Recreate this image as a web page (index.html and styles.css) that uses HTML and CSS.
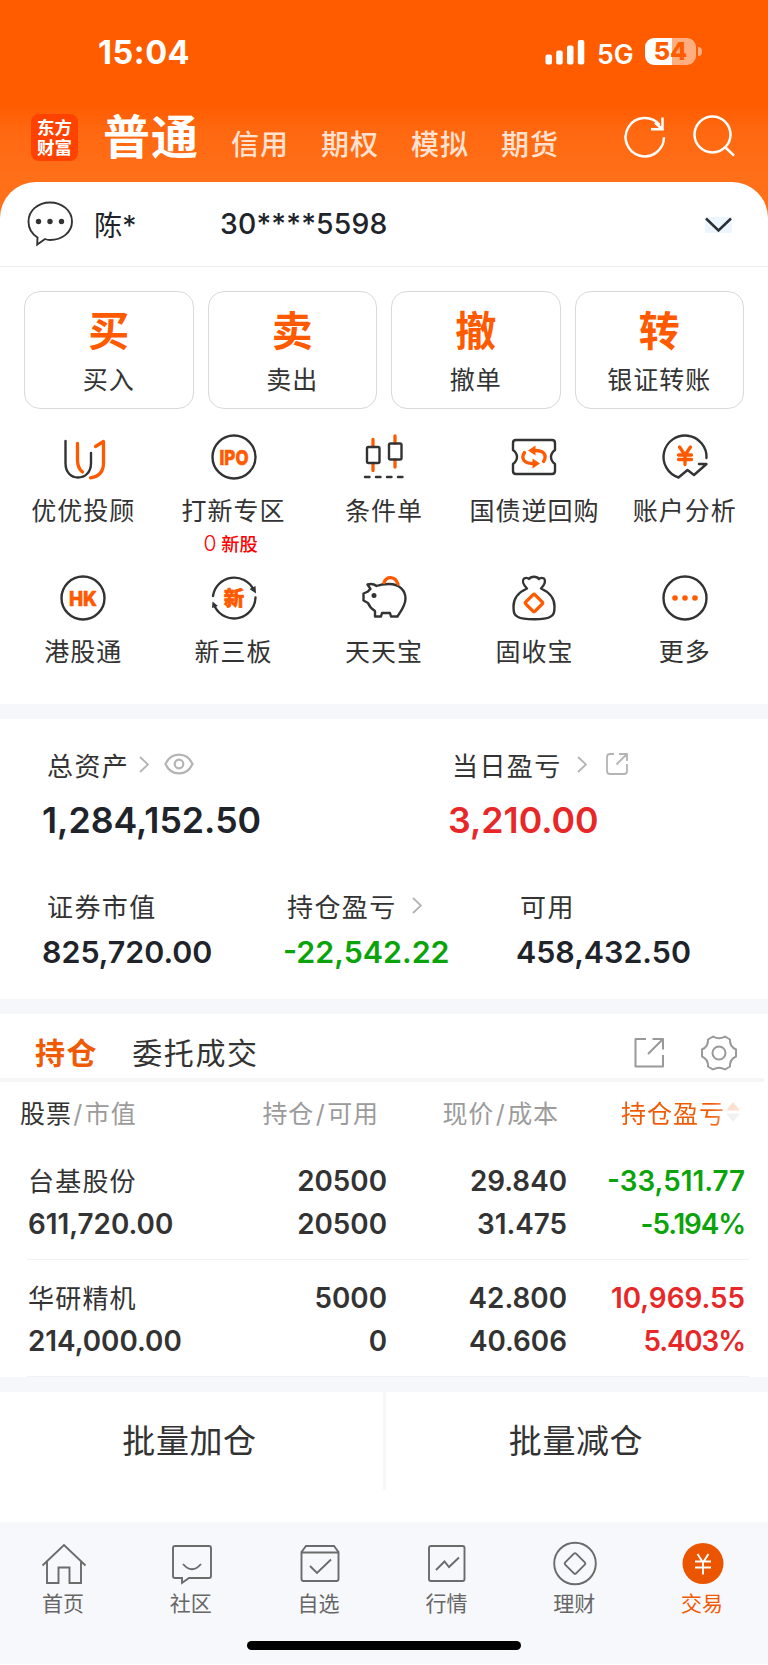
FILE: index.html
```html
<!DOCTYPE html>
<html lang="zh-CN">
<head>
	<meta charset="UTF-8">
	<meta name="viewport" content="width=device-width, initial-scale=1.0">
	<title>东方财富 - 交易</title>
	<link rel="stylesheet" href="styles.css">
</head>
<body>

<!-- Status bar and account type tabs -->
<div class="top">
	<div class="statusBar">
		<span class="time">15:04</span>
		<svg class="signal" width="40" height="26" viewBox="0 0 40 26" fill="#fff">
			<rect x="0.5" y="14.5" width="6.5" height="10" rx="2"/>
			<rect x="11.2" y="10.5" width="6.5" height="14" rx="2"/>
			<rect x="22" y="5.5" width="6.5" height="19" rx="2"/>
			<rect x="32.8" y="0" width="6.5" height="24.5" rx="2"/>
		</svg>
		<span class="network">5G</span>
		<span class="battery">54</span>
		<span class="batteryTip"></span>
	</div>
	<div class="navBar">
		<div class="logo">东方<br>财富</div>
		<span class="navMain">普通</span>
		<span class="navItem">信用</span>
		<span class="navItem">期权</span>
		<span class="navItem">模拟</span>
		<span class="navItem">期货</span>
		<div class="navIcons">
			<svg width="44" height="44" viewBox="0 0 44 44" fill="none" stroke="#fff" stroke-width="2.5">
				<path d="M41 22.3A19.2 19.2 0 1 1 36.5 9.8"/>
				<path d="M39.5 2.5v11.8H28M39 14 32 7.5"/>
			</svg>
			<svg width="44" height="44" viewBox="0 0 44 44" fill="none" stroke="#fff" stroke-width="2.5">
				<circle cx="20.5" cy="19.5" r="18"/>
				<path d="M33 32l9 8.7"/>
			</svg>
		</div>
	</div>
</div>

<div class="sheet">
	<div class="account">
		<svg class="bubble" width="48" height="48" viewBox="0 0 48 48">
			<path d="M11.5 38.5C6 35 2.500 29.500 2.500 22.500C2.500 11.500 12 3.500 24 3.500s22 8 22 19-10 18.500-22 18.500q-3 0-5-1L11.200 45.500z" fill="none" stroke="#333" stroke-width="1.900"/>
			<circle cx="12.500" cy="22.500" r="2.700" fill="#333"/>
			<circle cx="24" cy="22.500" r="2.700" fill="#333"/>
			<circle cx="35.500" cy="22.500" r="2.700" fill="#333"/>
		</svg>
		<span class="accountName">陈*</span>
		<span class="accountNo">30****5598</span>
		<svg class="accountArrow" width="27" height="16" viewBox="0 0 27 16" fill="none" stroke="#2b2f33" stroke-width="2.500">
			<path d="M1 1.500 13.500 13.500 26 1.500"/>
		</svg>
	</div>

	<!-- Buy / sell / cancel / transfer -->
	<div class="cards">
		<div class="card"><b>买</b><span>买入</span></div>
		<div class="card"><b>卖</b><span>卖出</span></div>
		<div class="card"><b>撤</b><span>撤单</span></div>
		<div class="card"><b>转</b><span>银证转账</span></div>
	</div>

	<!-- Shortcuts -->
	<div class="tools">
		<div class="tool">
			<svg viewBox="0 0 52 52">
				<path d="M8.500 10v22c0 10 6 14.500 12.500 14.500S34 42 34 32V22"/>
				<path class="hot" d="M20.500 12.500V29q0 8 5 12M38.500 15.500l8-5V32q0 13-13 14.800"/>
			</svg>
			<span>优优投顾</span>
		</div>
		<div class="tool">
			<svg viewBox="0 0 52 52">
				<circle cx="26" cy="26" r="21.500"/>
				<text x="26" y="33.500" textLength="29" lengthAdjust="spacingAndGlyphs">IPO</text>
			</svg>
			<span>打新专区</span>
			<em><i>0</i> 新股</em>
		</div>
		<div class="tool">
			<svg viewBox="0 0 52 52">
				<path class="hot" d="M15 8.500v7M15 32.500v7M37 5v7M37 29v7"/>
				<rect x="9" y="16" width="12.500" height="16" rx="1.500"/>
				<rect x="31" y="12.500" width="12.500" height="16" rx="1.500"/>
				<path d="M7 46h4.500M18 46h4.500M29 46h4.500M40 46h4.500"/>
			</svg>
			<span>条件单</span>
		</div>
		<div class="tool">
			<svg viewBox="0 0 52 52">
				<path d="M8 9h36q3 0 3 3v7q-4 3-4 7t4 7v7q0 3-3 3H8q-3 0-3-3v-7q4-3 4-7t-4-7v-7q0-3 3-3z"/>
				<path class="hot" d="M16.500 21.500q-3 4.500-.5 8 2.500 3 8.500 3M35.500 30.500q3-4.500.5-8-2.500-3-8.500-3"/>
				<path class="hotFill" d="M20 19.500l7.500-5v10zM32 32.500l-7.500-5v10z"/>
			</svg>
			<span>国债逆回购</span>
		</div>
		<div class="tool">
			<svg viewBox="0 0 52 52">
				<path d="M47.500 27A21.500 21.500 0 1 0 19.500 46.500L28.500 39l6.500 5L47.500 33H40"/>
				<path class="hot" d="M20.500 16l5.500 8 5.500-8M26 24v9.500M19.500 24h13M19.500 28.500h13"/>
			</svg>
			<span>账户分析</span>
		</div>
		<div class="tool">
			<svg viewBox="0 0 52 52">
				<circle cx="26" cy="26" r="21.500"/>
				<text x="26" y="33.500" textLength="28" lengthAdjust="spacingAndGlyphs">HK</text>
			</svg>
			<span>港股通</span>
		</div>
		<div class="tool">
			<svg viewBox="0 0 52 52">
				<path d="M5 24A21.500 21.500 0 0 1 45.500 17.500M47.500 25.500A21.500 21.500 0 0 1 7 35"/>
				<path class="darkFill" d="M41.500 17l6-3 .5 7.500zM4.500 29.500l5.500 4.500-6 2z"/>
				<text x="26" y="33.500">新</text>
			</svg>
			<span>新三板</span>
		</div>
		<div class="tool">
			<svg viewBox="0 0 52 52">
				<path d="M9.500 12.500q5.500-1.500 9 1.500 5-2 12.500-2C41 12 47.500 18 47.500 26.500c0 7-4.500 12.500-8 18H33l-1-3.500h-8L23 44.500h-6V39q-5-3-7-8l-4.500-2.500v-7L10 19.500q1-1.500 2.500-2.500z"/>
				<path class="hot" d="M26 10.500C29 3.500 37 4 40 12"/>
				<circle class="darkFill" cx="16" cy="23.500" r="2.500"/>
			</svg>
			<span>天天宝</span>
		</div>
		<div class="tool">
			<svg viewBox="0 0 52 52">
				<path d="M19 16.500c-4-4-5-8-3-10 2-1 4-.5 5 .5 2-3 8-3 10 0 1-1 3-1.500 5-.5 2 2 1 6-3 10 9 4 13.500 10 13.500 18 0 6-.5 8.500-4.500 10.500-5 3-27 3-32 0-4-2-4.500-4.500-4.500-10.500 0-8 4.500-14 13.500-18z"/>
				<rect class="hot" x="19.500" y="24.500" width="13" height="13" rx="1.500" transform="rotate(45 26 31)"/>
			</svg>
			<span>固收宝</span>
		</div>
		<div class="tool">
			<svg viewBox="0 0 52 52">
				<circle cx="26" cy="26" r="21.500"/>
				<circle class="hotFill" cx="16" cy="26" r="2.800"/>
				<circle class="hotFill" cx="26" cy="26" r="2.800"/>
				<circle class="hotFill" cx="36" cy="26" r="2.800"/>
			</svg>
			<span>更多</span>
		</div>
	</div>
</div>

<!-- Assets -->
<div class="assets">
	<div class="assetTop">
		<div class="asset">
			<p class="label">总资产
				<svg class="arrow" width="10" height="17" viewBox="0 0 10 17"><path d="M1 1l8 7.500L1 16"/></svg>
				<svg class="eye" width="30" height="22" viewBox="0 0 30 22"><path d="M1.500 11C7-1.500 23-1.500 28.500 11 23 23.500 7 23.500 1.500 11z"/><circle cx="15" cy="11" r="4.300"/></svg>
			</p>
			<p class="bigNum">1,284,152.50</p>
		</div>
		<div class="asset">
			<p class="label">当日盈亏
				<svg class="arrow wide" width="10" height="17" viewBox="0 0 10 17"><path d="M1 1l8 7.500L1 16"/></svg>
				<svg class="share" width="24" height="24" viewBox="0 0 24 24"><path d="M9 2H5Q2 2 2 5v14q0 3 3 3h14q3 0 3-3v-7M14 2h8v7M21.500 2.500 11.500 12.500"/></svg>
			</p>
			<p class="bigNum up">3,210.00</p>
		</div>
	</div>
	<div class="assetBottom">
		<div class="asset">
			<p class="label">证券市值</p>
			<p class="num">825,720.00</p>
		</div>
		<div class="asset">
			<p class="label">持仓盈亏
				<svg class="arrow wide" width="10" height="17" viewBox="0 0 10 17"><path d="M1 1l8 7.500L1 16"/></svg>
			</p>
			<p class="num down">-22,542.22</p>
		</div>
		<div class="asset">
			<p class="label">可用</p>
			<p class="num">458,432.50</p>
		</div>
	</div>
</div>

<!-- Positions -->
<div class="positions">
	<div class="tabs">
		<span class="tab active">持仓</span>
		<span class="tab">委托成交</span>
		<svg class="tabShare" width="32" height="32" viewBox="0 0 32 32"><path d="M13 2H2.500v27.500h27.500V18M19.500 2H30v10.500M29.500 2.500 15 17"/></svg>
		<svg class="gear" width="38" height="38" viewBox="0 0 38 38">
			<path d="M13 2.500Q19 6 25 2.500L30 5.500Q29.500 12.500 36 15.500V22.500Q29.500 25.500 30 32.500L25 35.500Q19 32 13 35.500L8 32.500Q8.500 25.500 2 22.500V15.500Q8.500 12.500 8 5.500Z"/>
			<circle cx="19" cy="19" r="6.500"/>
		</svg>
	</div>
	<div class="tableHead">
		<span><i>股票</i><u>/</u>市值</span>
		<span>持仓<u>/</u>可用</span>
		<span>现价<u>/</u>成本</span>
		<span class="sorted">持仓盈亏<svg width="16" height="22" viewBox="0 0 16 22"><path d="M8 1l7 8.500H1z" fill="#ffe0d0"/><path d="M8 21l7-8.500H1z" fill="#f2f2f4"/></svg></span>
	</div>
	<div class="row">
		<div><span class="stock">台基股份</span><span>611,720.00</span></div>
		<div><span>20500</span><span>20500</span></div>
		<div><span>29.840</span><span>31.475</span></div>
		<div class="down"><span>-33,511.77</span><span class="percent">-5.194%</span></div>
	</div>
	<div class="row">
		<div><span class="stock">华研精机</span><span>214,000.00</span></div>
		<div><span>5000</span><span>0</span></div>
		<div><span>42.800</span><span>40.606</span></div>
		<div class="up"><span>10,969.55</span><span class="percent">5.403%</span></div>
	</div>
</div>

<div class="batch">
	<div>批量加仓</div>
	<div>批量减仓</div>
</div>

<!-- Bottom navigation -->
<div class="bottomBar">
	<div class="menu">
		<div class="menuItem">
			<svg viewBox="0 0 46 46"><path d="M1.500 24.500 23 4l21.500 20.500M6 20.500V42h11.500V26.500h11V42H40V20.500"/></svg>
			<span>首页</span>
		</div>
		<div class="menuItem">
			<svg viewBox="0 0 46 46"><path d="M6 5h34q2 0 2 2v28q0 2-2 2H20l-7 5v-5H6q-2 0-2-2V7q0-2 2-2z"/><path d="M14 23q9 10.500 18 0"/></svg>
			<span>社区</span>
		</div>
		<div class="menuItem">
			<svg viewBox="0 0 46 46"><path d="M4.500 11 9 5h28l4.500 6v27q0 2-2 2h-33q-2 0-2-2zM4.500 11.500h37M13 25l7 7 14-13.500"/></svg>
			<span>自选</span>
		</div>
		<div class="menuItem">
			<svg viewBox="0 0 46 46"><rect x="5" y="5" width="35.500" height="35" rx="2"/><path d="M12 29l8.500-8.500 4.500 5.500L35 16.500"/></svg>
			<span>行情</span>
		</div>
		<div class="menuItem">
			<svg viewBox="0 0 46 46"><circle cx="23" cy="22.500" r="20.800"/><rect x="15.300" y="14.800" width="15.400" height="15.400" rx="1.500" transform="rotate(45 23 22.500)"/></svg>
			<span>理财</span>
		</div>
		<div class="menuItem current">
			<svg viewBox="0 0 46 46"><circle cx="23" cy="22.500" r="20.500"/><path d="M17.500 13 23 21.500 28.500 13M23 21.500v12M15 20.500h16M15 26.500h16"/></svg>
			<span>交易</span>
		</div>
	</div>
	<div class="homeLine"></div>
</div>

</body>
</html>
```
FILE: styles.css
```css
* {
	box-sizing: border-box;
}
body {
	margin: 0;
	width: 768px;
	height: 1665px;
	overflow: hidden;
	font-family: Inter, "Noto Sans CJK SC", sans-serif;
	color: #333;
	background-color: #fff;
}
p {
	margin: 0;
}
svg {
	flex: none;
}
.up {
	color: #e82828;
}
.down {
	color: #0aa30a;
}

/* top */
.top {
	height: 230px;
	background: linear-gradient(#ff5c00 105px, #ff6810 130px, #ff7019 182px);
	color: #fff;
}
.statusBar {
	display: flex;
	align-items: center;
	height: 105px;
	padding-left: 98px;
}
.time {
	width: 447px;
	font-size: 32.5px;
	font-weight: 700;
	letter-spacing: 0.5px;
}
.network {
	width: 48px;
	margin-left: 12px;
	padding-top: 2px;
	font-size: 26.5px;
	font-weight: 600;
}
.battery {
	width: 51px;
	height: 27px;
	margin-top: -2px;
	border-radius: 9px;
	background: linear-gradient(90deg, #fff 27px, #ffae80 27px);
	color: #ff5c00;
	font-size: 25px;
	font-weight: 800;
	line-height: 27px;
	text-align: center;
}
.batteryTip {
	width: 4px;
	height: 9px;
	margin: -2px 0 0 2px;
	border-radius: 0 5px 5px 0;
	background-color: #ffae80;
}
.navBar {
	display: flex;
	align-items: center;
	height: 64px;
	padding: 0 31px;
}
.logo {
	width: 47px;
	height: 47px;
	padding-top: 4px;
	border-radius: 8px;
	background-color: #ff4200;
	font-size: 17.5px;
	font-weight: 700;
	line-height: 20px;
	text-align: center;
}
.navMain {
	width: 128px;
	margin-left: 25px;
	font-size: 47px;
	font-weight: 700;
	line-height: 60px;
	letter-spacing: 1px;
}
.navItem {
	width: 90px;
	padding-top: 11px;
	font-size: 28px;
	font-weight: 500;
	letter-spacing: 1px;
	color: #ffe2d1;
}
.navIcons {
	display: flex;
	gap: 25px;
	margin-left: 32px;
}

/* white sheet */
.sheet {
	height: 522px;
	margin-top: -48px;
	border-radius: 36px 36px 0 0;
	background-color: #fff;
}
.account {
	display: flex;
	align-items: center;
	height: 85px;
	padding: 0 36px 2px 26px;
	border-bottom: 1px solid #ececec;
	font-size: 28.3px;
	color: #20242a;
}
.accountName {
	width: 126px;
	margin-left: 20px;
}
.accountNo {
	flex: 1;
	padding-top: 2px;
	font-weight: 500;
	letter-spacing: 0.2px;
}
.accountArrow {
	background-color: #edf6ff;
	margin-top: 3px;
}
.cards {
	display: grid;
	grid-template-columns: repeat(4, 1fr);
	gap: 14px;
	padding: 24px 24px 0;
}
.card {
	display: flex;
	flex-direction: column;
	align-items: center;
	height: 118px;
	padding-top: 15px;
	border: 1px solid #d9d9db;
	border-radius: 16px;
}
.card b {
	font-size: 41px;
	line-height: 48px;
	color: #ff5a00;
}
.card span {
	margin-top: 13px;
	font-size: 25px;
	line-height: 24px;
	letter-spacing: 1px;
}
.tools {
	display: grid;
	grid-template-columns: repeat(5, 1fr);
	grid-auto-rows: 141px;
	padding: 22px 8px 0;
}
.tool {
	display: flex;
	flex-direction: column;
	align-items: center;
}
.tool svg {
	width: 52px;
	height: 52px;
	fill: none;
	stroke: #333;
	stroke-width: 2.4;
	stroke-linejoin: round;
	stroke-linecap: round;
}
.tool svg text {
	fill: #ff5a00;
	stroke: #ff5a00;
	stroke-width: 0.6;
	font-size: 20.5px;
	font-weight: 800;
	text-anchor: middle;
}
.tool .hot {
	stroke: #ff5a00;
	stroke-width: 3.3;
}
.tool .hotFill {
	fill: #ff5a00;
	stroke: none;
}
.tool .darkFill {
	fill: #333;
	stroke: none;
}
.tool span {
	margin-top: 14px;
	font-size: 25px;
	line-height: 28px;
	letter-spacing: 1px;
	white-space: nowrap;
}
.tool em {
	margin: 7px 6px 0 0;
	font-size: 18.3px;
	font-style: normal;
	font-weight: 500;
	line-height: 24px;
	color: #f00;
}
.tool em i {
	font-size: 21px;
	font-style: normal;
	font-weight: 300;
}

/* assets */
.assets {
	height: 310px;
	padding: 27px 42px 0;
	border-top: 15px solid #f6f7fa;
	border-bottom: 15px solid #f6f7fa;
}
.assetTop {
	display: grid;
	grid-template-columns: 406px 1fr;
	height: 141px;
}
.assetBottom {
	display: grid;
	grid-template-columns: 241px 233px 1fr;
}
.label {
	display: flex;
	align-items: center;
	height: 36px;
	padding-left: 4px;
	font-size: 26px;
	letter-spacing: 1.4px;
}
.asset:first-child .label {
	padding-left: 5px;
}
.label svg {
	fill: none;
	stroke: #b4b4b4;
	stroke-width: 1.8;
}
.label .arrow {
	margin-left: 10px;
}
.label .arrow.wide {
	margin-left: 15px;
}
.eye {
	margin-left: 15px;
}
.eye path, .eye circle {
	stroke-width: 2.2;
}
.share {
	margin-left: 18px;
}
.bigNum {
	margin-top: 19px;
	font-size: 35.7px;
	font-weight: 600;
	line-height: 38px;
	color: #20242a;
}
.num {
	margin-top: 13px;
	font-size: 30.4px;
	font-weight: 600;
	line-height: 32px;
	color: #20242a;
}
.bigNum.up {
	color: #e82828;
}
.num.down {
	color: #0aa30a;
}

/* positions */
.tabs {
	display: flex;
	align-items: center;
	height: 68px;
	width: 764px;
	padding: 14px 26px 4px 35px;
	border-bottom: 4px solid #f6f6f8;
	font-size: 30px;
	letter-spacing: 1.6px;
}
.tab {
	margin-right: 34px;
}
.tab.active {
	color: #f05a05;
	font-weight: 600;
}
.tabs svg {
	margin-top: 4px;
	fill: none;
	stroke: #999;
	stroke-width: 2;
	stroke-linejoin: round;
}
.tabs .tabShare {
	margin-left: auto;
}
.tabs .gear {
	margin-left: 35px;
}
.tableHead {
	display: grid;
	grid-template-columns: 180px 179px 180px 1fr;
	align-items: center;
	height: 61px;
	padding: 0 27px 1px 20px;
	font-size: 25px;
	letter-spacing: 0.9px;
	text-align: right;
	color: #9b9b9b;
}
.tableHead span:first-child {
	text-align: left;
}
.tableHead i {
	font-style: normal;
	color: #333;
}
.tableHead u {
	margin: 0 1.5px;
	text-decoration: none;
}
.tableHead .sorted {
	display: flex;
	align-items: center;
	justify-content: flex-end;
	letter-spacing: 1px;
	background: linear-gradient(90deg, #f05a05 152px, #fbd6c2 180px);
	background-clip: text;
	-webkit-background-clip: text;
	color: transparent;
}
.row {
	display: grid;
	grid-template-columns: 180px 180px 180px 178px;
	height: 117px;
	margin: 0 19px 0 27px;
	padding: 17px 0 0 0;
	border-bottom: 1px solid #f1f1f3;
	font-size: 27.8px;
	font-weight: 600;
	text-align: right;
}
.row span {
	display: block;
	line-height: 43px;
}
.row div:first-child {
	padding-left: 1px;
	text-align: left;
}
.row .stock {
	font-size: 26px;
	font-weight: 400;
	letter-spacing: 1.2px;
}
.row .percent {
	letter-spacing: -1.1px;
}

/* batch buttons */
.batch {
	display: flex;
	height: 145px;
	border-top: 15px solid #f6f7fa;
}
.batch div {
	width: 386px;
	height: 98px;
	padding-right: 4px;
	border-right: 3px solid #f7f7fa;
	font-size: 33px;
	line-height: 98px;
	letter-spacing: 0.6px;
	text-align: center;
}
.batch div:last-child {
	width: 382px;
	padding-right: 2px;
	border: none;
}

/* bottom navigation */
.bottomBar {
	height: 142px;
	padding-top: 19px;
	background-color: #f7f8fb;
}
.menu {
	display: grid;
	grid-template-columns: repeat(6, 1fr);
	padding-right: 1px;
}
.menuItem {
	display: flex;
	flex-direction: column;
	align-items: center;
	font-size: 21px;
	color: #666;
}
.menuItem svg {
	width: 46px;
	height: 46px;
	fill: none;
	stroke: #6b6b6b;
	stroke-width: 1.9;
}
.menuItem span {
	margin: 4px 2px 0 0;
	line-height: 26px;
}
.menuItem.current {
	color: #f05a05;
}
.menuItem.current circle {
	fill: #ec5500;
	stroke: none;
}
.menuItem.current path {
	stroke: #fff;
}
.homeLine {
	width: 274px;
	height: 9px;
	margin: 24px auto 0;
	border-radius: 5px;
	background-color: #000;
}
```
